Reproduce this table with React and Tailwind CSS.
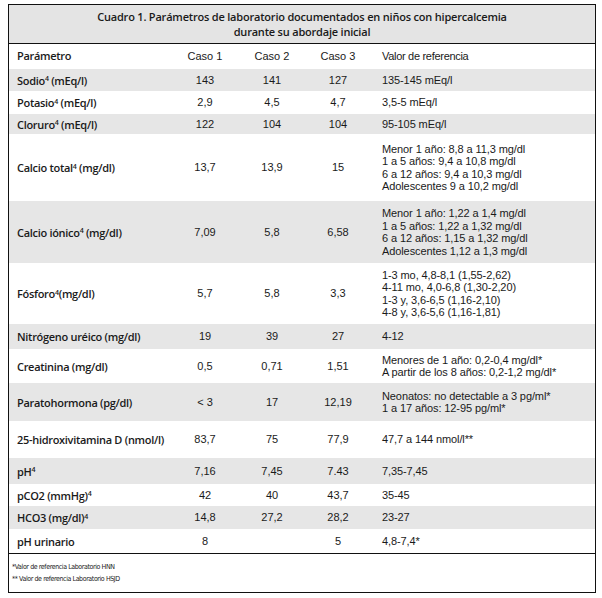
import React from "react";

const S = ({ children }) => <sup className="text-[7px]">{children}</sup>;

const rows = [
  { p: <>Sodio<S>4</S> (mEq/l)</>, c: ["143", "141", "127"], r: ["135-145 mEq/l"], h: "h-[22px]", g: true },
  { p: <>Potasio<S>4</S> (mEq/l)</>, c: ["2,9", "4,5", "4,7"], r: ["3,5-5 mEq/l"], h: "h-[23px]" },
  { p: <>Cloruro<S>4</S> (mEq/l)</>, c: ["122", "104", "104"], r: ["95-105 mEq/l"], h: "h-[20px]", g: true },
  { p: <>Calcio total<S>4</S> (mg/dl)</>, c: ["13,7", "13,9", "15"], r: ["Menor 1 año: 8,8 a 11,3 mg/dl", "1 a 5 años: 9,4 a 10,8 mg/dl", "6 a 12 años: 9,4 a 10,3 mg/dl", "Adolescentes 9 a 10,2 mg/dl"], h: "h-[67px]" },
  { p: <>Calcio iónico<S>4</S> (mg/dl)</>, c: ["7,09", "5,8", "6,58"], r: ["Menor 1 año: 1,22 a 1,4 mg/dl", "1 a 5 años: 1,22 a 1,32 mg/dl", "6 a 12 años: 1,15 a 1,32 mg/dl", "Adolescentes 1,12 a 1,3 mg/dl"], h: "h-[62px]", g: true },
  { p: <>Fósforo<S>4</S>(mg/dl)</>, c: ["5,7", "5,8", "3,3"], r: ["1-3 mo, 4,8-8,1 (1,55-2,62)", "4-11 mo, 4,0-6,8 (1,30-2,20)", "1-3 y, 3,6-6,5 (1,16-2,10)", "4-8 y, 3,6-5,6 (1,16-1,81)"], h: "h-[61px]" },
  { p: <>Nitrógeno uréico (mg/dl)</>, c: ["19", "39", "27"], r: ["4-12"], h: "h-[25px]", g: true },
  { p: <>Creatinina (mg/dl)</>, c: ["0,5", "0,71", "1,51"], r: ["Menores de 1 año: 0,2-0,4 mg/dl*", "A partir de los 8 años: 0,2-1,2 mg/dl*"], h: "h-[34px]" },
  { p: <>Paratohormona (pg/dl)</>, c: ["< 3", "17", "12,19"], r: ["Neonatos: no detectable a 3 pg/ml*", "1 a 17 años: 12-95 pg/ml*"], h: "h-[38px]", g: true },
  { p: <>25-hidroxivitamina D (nmol/l)</>, c: ["83,7", "75", "77,9"], r: ["47,7 a 144 nmol/l**"], h: "h-[37px]" },
  { p: <>pH<S>4</S></>, c: ["7,16", "7,45", "7.43"], r: ["7,35-7,45"], h: "h-[26px]", g: true },
  { p: <>pCO2 (mmHg)<S>4</S></>, c: ["42", "40", "43,7"], r: ["35-45"], h: "h-[22px]" },
  { p: <>HCO3 (mg/dl)<S>4</S></>, c: ["14,8", "27,2", "28,2"], r: ["23-27"], h: "h-[23px]", g: true },
  { p: <>pH urinario</>, c: ["8", "", "5"], r: ["4,8-7,4*"], h: "h-[24px]" },
];

const open = { fontFamily: '"Open Sans", "Liberation Sans", sans-serif' };
const lib = { fontFamily: '"Liberation Sans", Arial, sans-serif' };

export default function App() {
  return (
    <div className="w-[602px] h-[598px] bg-white pt-[4px] pl-[8px] text-[#1a1a1a]" style={lib}>
      <div className="w-[588px] h-[589px] border-[1.5px] border-[#111] flex flex-col">
        <div className="h-[39px] shrink-0 bg-[#e4e4e4] border-b-[1.5px] border-[#111] flex flex-col items-center justify-center text-[11px] font-semibold leading-[15px] tracking-[-0.2px]" style={open}>
          <div>Cuadro 1. Parámetros de laboratorio documentados en niños con hipercalcemia</div>
          <div>durante su abordaje inicial</div>
        </div>
        <div className="h-[25px] shrink-0 grid grid-cols-[162px_68px_66px_66px_1fr] items-center text-[11px]">
          <div className="pl-[8px] font-semibold tracking-[-0.3px]" style={open}>Parámetro</div>
          <div className="text-center">Caso 1</div>
          <div className="text-center">Caso 2</div>
          <div className="text-center">Caso 3</div>
          <div className="pl-[11px] tracking-[-0.3px]">Valor de referencia</div>
        </div>
        {rows.map((row, i) => (
          <div key={i} className={`${row.h} shrink-0 grid grid-cols-[162px_68px_66px_66px_1fr] items-center text-[11px] ${row.g ? "bg-[#e6e6e6]" : "bg-white"}`}>
            <div className="pl-[8px] font-semibold leading-none tracking-[-0.3px]" style={open}>{row.p}</div>
            {row.c.map((v, j) => (
              <div key={j} className="text-center">{v}</div>
            ))}
            <div className="pl-[11px] leading-[12.5px] tracking-[-0.1px]">
              {row.r.map((t, k) => (
                <div key={k}>{t}</div>
              ))}
            </div>
          </div>
        ))}
        <div className="flex-1 border-t-[1.5px] border-[#111] pl-[3px] pt-[7px] text-[7px] leading-[12px] tracking-[-0.4px]" style={{ fontFamily: '"Liberation Sans Narrow", "DejaVu Sans Condensed", sans-serif' }}>
          <div>*Valor de referencia Laboratorio HNN</div>
          <div>** Valor de referencia Laboratorio HSJD</div>
        </div>
      </div>
    </div>
  );
}
